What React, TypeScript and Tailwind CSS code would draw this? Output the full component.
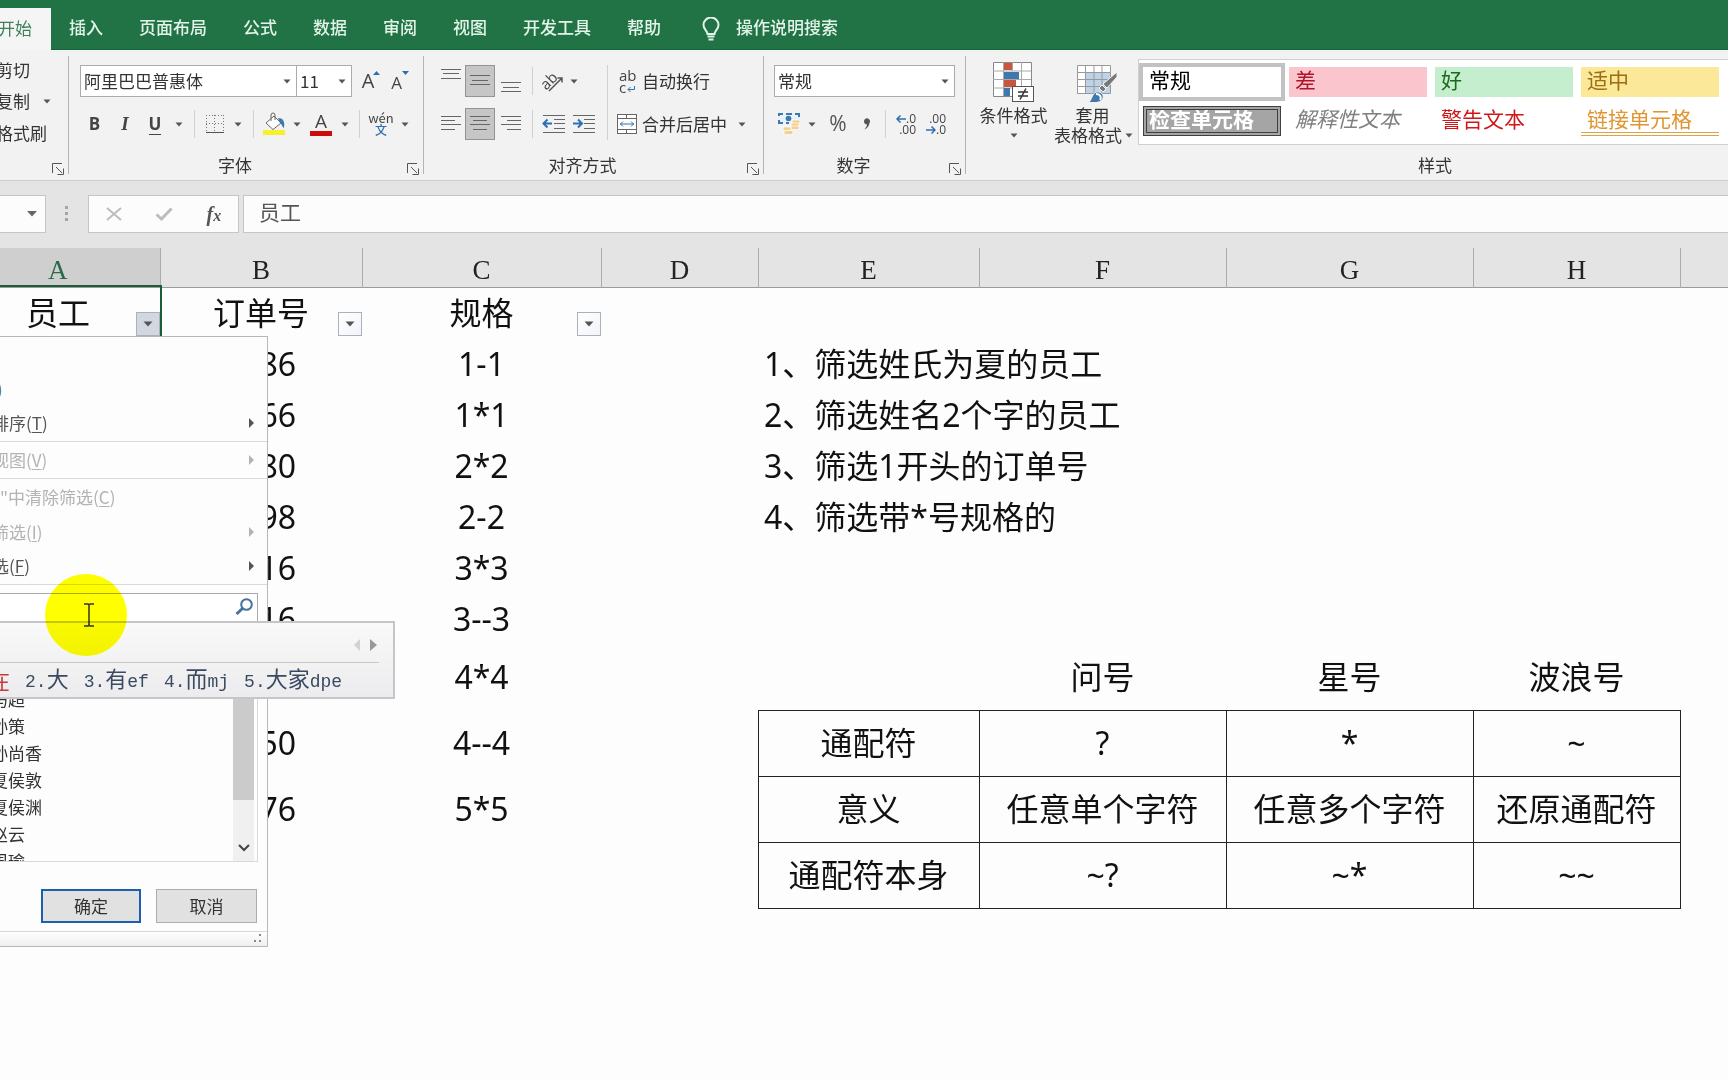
import React from "react";

const ui = "font-['Noto_Sans_CJK_SC','Noto_Sans',sans-serif]";
const cellFont = "font-['Noto_Sans','Noto_Sans_CJK_SC',sans-serif]";

function Caret({ className = "" }: { className?: string }) {
  return (
    <svg width="8" height="5" viewBox="0 0 8 5" className={`shrink-0 ${className}`} aria-hidden="true">
      <path d="M0.5 0.5h7L4 4.5z" fill="#555" />
    </svg>
  );
}

function CaretButton({ label, className = "w-[18px]" }: { label: string; className?: string }) {
  return (
    <button aria-label={label} className={`flex h-8 items-center justify-center ${className}`}>
      <Caret />
    </button>
  );
}

function Tool({ label, className = "", children }: { label: string; className?: string; children: React.ReactNode }) {
  return (
    <button aria-label={label} className={`flex h-8 shrink-0 items-center justify-center ${className}`}>
      {children}
    </button>
  );
}

function Rule({ className = "mx-1.5" }: { className?: string }) {
  return <span className={`h-7 w-px shrink-0 bg-[#d0d0d0] ${className}`} />;
}

function Launcher({ label }: { label: string }) {
  return (
    <button aria-label={label} className="absolute bottom-[5px] right-1">
      <svg width="12" height="12" viewBox="0 0 12 12" fill="none" stroke="#555" className="block" aria-hidden="true">
        <path d="M0.5 10V0.5H10M4 4l6 6M11.500 5.500V11.500H5.500" />
      </svg>
    </button>
  );
}

function Group({ title, className, children }: { title: string; className: string; children: React.ReactNode }) {
  return (
    <section aria-label={title} className={`relative flex shrink-0 flex-col justify-between pt-[15px] ${className}`}>
      {children}
      <div className="pb-[3px] pr-[22px] text-center leading-6">{title}</div>
    </section>
  );
}

function GroupRule() {
  return <span className="my-1.5 w-px shrink-0 bg-[#b4b4b4]" />;
}

function Combo({ label, value, className }: { label: string; value: string; className: string }) {
  return (
    <span className={`relative flex h-8 shrink-0 ${className}`}>
      <select aria-label={label} className="w-full appearance-none border border-[#ababab] bg-white pl-[3px] text-[#333] outline-none">
        <option>{value}</option>
      </select>
      <Caret className="pointer-events-none absolute right-1.5 top-3.5" />
    </span>
  );
}

function AlignIcon({ lines }: { lines: [number, number, number][] }) {
  return (
    <svg width="20" height="24" viewBox="0 0 20 24" stroke="#666" aria-hidden="true">
      {lines.map(([a, b, y]) => (
        <path key={y} d={`M${a} ${y}.5H${b}`} />
      ))}
    </svg>
  );
}

function IndentIcon({ inward }: { inward?: boolean }) {
  return (
    <svg width="24" height="20" viewBox="0 0 24 20" fill="none" stroke="#666" aria-hidden="true">
      <path d="M1 1.500H23M12 5.500H23M12 9.500H23M12 14.500H23M1 18.500H23" />
      {inward ? (
        <path d="M1 9.500H9M6 5.500l4 4-4 4" stroke="#2f6fb0" strokeWidth="2" />
      ) : (
        <path d="M10 9.500H2M5.500 5.500l-4 4 4 4" stroke="#2f6fb0" strokeWidth="2" />
      )}
    </svg>
  );
}

const tabs = ["插入", "页面布局", "公式", "数据", "审阅", "视图", "开发工具", "帮助"];

function TabBar() {
  return (
    <nav className="flex h-[50px] items-end border-b border-[#17633a] bg-[#217346] text-[17px] font-medium text-[#e2f3e8]">
      <button className="-mb-px flex h-[42px] w-[51px] shrink-0 items-center overflow-hidden whitespace-nowrap bg-[#f4f5f4] pb-0.5 font-normal text-[#3f7f5c]">
        <span className="-ml-[2px]">开始</span>
      </button>
      <div className="ml-[18px] flex h-[42px] items-center gap-9 pb-0.5">
        {tabs.map((t) => (
          <button key={t} className="whitespace-nowrap">{t}</button>
        ))}
      </div>
      <button className="ml-[41px] flex h-[42px] items-center gap-4 whitespace-nowrap pb-0.5">
        <svg width="18" height="24" viewBox="0 0 18 24" fill="none" stroke="#e2f3e8" strokeWidth="2" className="mt-1" aria-hidden="true">
          <path d="M5.500 17c0-3-4-4.500-4-9a7.500 7.500 0 0 1 15 0c0 4.500-4 6-4 9zM5.500 19.500h7M6.500 22.500h5" />
        </svg>
        操作说明搜索
      </button>
    </nav>
  );
}

function ClipboardGroup() {
  return (
    <section aria-label="剪贴板" className="relative w-[68px] shrink-0 overflow-hidden whitespace-nowrap pt-1">
      <button className="-ml-1 block h-8">剪切</button>
      <div className="-mt-px flex items-center">
        <button className="-ml-1 h-8">复制</button>
        <CaretButton label="复制选项" className="ml-2 w-[18px]" />
      </div>
      <button className="-ml-1 block h-8">格式刷</button>
      <Launcher label="剪贴板设置" />
    </section>
  );
}

function FontGroup() {
  return (
    <Group title="字体" className="w-[354px]">
      <div className="flex flex-col gap-[11px]">
        <div className="flex pl-[11px]">
          <Combo label="字体名称" value="阿里巴巴普惠体" className="w-[217px]" />
          <Combo label="字号" value="11" className="-ml-px w-[56px]" />
          <Tool label="增大字号" className="ml-1.5 w-[26px] gap-0">
            <span className="font-['Open_Sans',sans-serif] text-[20px] text-[#444]">A</span>
            <svg width="7" height="4" viewBox="0 0 7 4" className="-ml-px mb-4" aria-hidden="true"><path d="M0 4h7L3.500 0z" fill="#2f6fb0" /></svg>
          </Tool>
          <Tool label="减小字号" className="ml-1 w-[24px]">
            <span className="pt-1 font-['Open_Sans',sans-serif] text-[17px] text-[#444]">A</span>
            <svg width="7" height="4" viewBox="0 0 7 4" className="mb-4" aria-hidden="true"><path d="M0 0h7L3.500 4z" fill="#2f6fb0" /></svg>
          </Tool>
        </div>
        <div className="flex items-center pl-2.5 text-[#444]">
          <Tool label="加粗" className="w-[31px]"><b className="font-['Open_Sans',sans-serif] text-[17px]">B</b></Tool>
          <Tool label="倾斜" className="w-[30px]"><i className="font-['Liberation_Serif',serif] text-[19px] font-bold">I</i></Tool>
          <Tool label="下划线" className="w-[30px]"><span className="border-b border-[#444] font-['Open_Sans',sans-serif] text-[17px] font-bold leading-5">U</span></Tool>
          <CaretButton label="下划线选项" />
          <Rule />
          <Tool label="边框" className="w-[28px]">
            <svg width="20" height="20" viewBox="0 0 20 20" fill="none" stroke="#777" aria-hidden="true">
              <path d="M1 1.500H19M1 9.500H19M1.500 1V17M9.500 1V17M18.500 1V17" strokeDasharray="1 2" />
              <path d="M1 18.500H19" stroke="#555" />
            </svg>
          </Tool>
          <CaretButton label="边框选项" />
          <Rule />
          <Tool label="填充颜色" className="w-[28px]">
            <svg width="24" height="24" viewBox="0 0 24 24" fill="none" aria-hidden="true">
              <rect x="1" y="18" width="22" height="5" fill="#f7f12c" />
              <path d="M4 11l8-7 7 7-8 6.500z" fill="#fff" stroke="#666" />
              <path d="M9 9V3a2 2 0 0 1 4 0v5" stroke="#666" />
              <path d="M16 6c5 0 7 3 6 10-2-1-2-4-4-5z" fill="#3f78ad" />
            </svg>
          </Tool>
          <CaretButton label="填充颜色选项" />
          <Tool label="字体颜色" className="w-[30px]">
            <span className="flex h-6 w-[22px] flex-col items-center justify-between">
              <span className="font-['Open_Sans',sans-serif] text-[19px] leading-[19px]">A</span>
              <span className="h-[5px] w-full shrink-0 bg-[#cf0a0a]" />
            </span>
          </Tool>
          <CaretButton label="字体颜色选项" className="w-[17px]" />
          <Rule />
          <Tool label="拼音指南" className="w-[30px] flex-col">
            <span className="text-[13px] leading-3">wén</span>
            <span className="text-[12px] font-medium leading-3 text-[#2f6fb0]">文</span>
          </Tool>
          <CaretButton label="拼音选项" className="w-[17px]" />
        </div>
      </div>
      <Launcher label="字体设置" />
    </Group>
  );
}

function AlignmentGroup() {
  return (
    <Group title="对齐方式" className="w-[339px]">
      <div className="flex">
        <div className="flex flex-col gap-[11px] pl-[13px]">
          <div className="flex items-center">
            <Tool label="顶端对齐" className="w-[28px]"><AlignIcon lines={[[0, 20, 0], [2, 18, 4], [0, 20, 9]]} /></Tool>
            <Tool label="垂直居中" className="w-[30px] border border-[#949494] bg-[#c6c6c6]"><AlignIcon lines={[[0, 20, 6], [2, 18, 11], [0, 20, 15]]} /></Tool>
            <Tool label="底端对齐" className="w-[31px]"><AlignIcon lines={[[0, 20, 13], [2, 18, 18], [0, 20, 22]]} /></Tool>
            <Rule />
            <Tool label="方向" className="w-[26px]">
              <span className="relative flex size-6 items-center justify-center">
                <span className="-rotate-45 pb-1.5 pr-1 font-['Open_Sans',sans-serif] text-[15px] leading-4 text-[#444]">ab</span>
                <svg width="24" height="24" viewBox="0 0 24 24" className="absolute inset-0" fill="none" stroke="#555" aria-hidden="true">
                  <path d="M9 22L22 9M17.500 9H22v4.500" strokeWidth="1.500" />
                </svg>
              </span>
            </Tool>
            <CaretButton label="方向选项" />
          </div>
          <div className="flex items-center">
            <Tool label="左对齐" className="w-[28px]"><AlignIcon lines={[[0, 20, 4], [0, 14, 8], [0, 20, 12], [0, 14, 17]]} /></Tool>
            <Tool label="居中" className="w-[30px] border border-[#949494] bg-[#c6c6c6]"><AlignIcon lines={[[0, 20, 4], [3, 17, 8], [0, 20, 12], [3, 17, 17]]} /></Tool>
            <Tool label="右对齐" className="w-[31px]"><AlignIcon lines={[[0, 20, 4], [6, 20, 8], [0, 20, 12], [6, 20, 17]]} /></Tool>
            <Rule />
            <Tool label="减少缩进量" className="w-[30px]"><IndentIcon /></Tool>
            <Tool label="增加缩进量" className="w-[30px]"><IndentIcon inward /></Tool>
          </div>
        </div>
        <span className="ml-2 w-px bg-[#d0d0d0]" />
        <div className="flex flex-col gap-[11px] pl-[9px]">
          <button className="flex h-8 items-center gap-[5px] whitespace-nowrap">
            <span className="relative flex w-5 flex-col pl-0.5 text-left font-['Open_Sans',sans-serif] text-[15px] leading-[12px] text-[#444]">
              <span>ab</span>
              <span>c</span>
              <svg width="8" height="7" viewBox="0 0 8 7" className="absolute bottom-0 right-0.5" fill="none" stroke="#2f6fb0" aria-hidden="true">
                <path d="M7.500 0v3.500H1M3.500 1L1 3.500 3.500 6" />
              </svg>
            </span>
            自动换行
          </button>
          <div className="flex">
            <button className="flex h-8 items-center gap-[5px] whitespace-nowrap">
              <svg width="20" height="20" viewBox="0 0 20 20" fill="none" stroke="#666" aria-hidden="true">
                <rect x="0.5" y="0.5" width="19" height="19" fill="#fff" />
                <path d="M0 4.500H20M0 15.500H20M9.500 0V4M9.500 16V20" />
                <path d="M3 10H17M6 7.500L3.500 10 6 12.500M14 7.500l2.500 2.500L14 12.500" stroke="#2f6fb0" />
              </svg>
              合并后居中
            </button>
            <CaretButton label="合并选项" className="ml-1.5 w-[18px]" />
          </div>
        </div>
      </div>
      <Launcher label="对齐设置" />
    </Group>
  );
}

function DecimalIcon({ top, bottom, left }: { top: string; bottom: string; left?: boolean }) {
  return (
    <span className="flex w-5 flex-col font-['Open_Sans',sans-serif] text-[12px] leading-[11px] text-[#444]">
      <span className="flex items-center justify-end">
        {left && <SmallArrow left />}
        {top}
      </span>
      <span className="flex items-center justify-end">
        {!left && <SmallArrow />}
        {bottom}
      </span>
    </span>
  );
}

function SmallArrow({ left }: { left?: boolean }) {
  return (
    <svg width="10" height="8" viewBox="0 0 10 8" fill="none" stroke="#2f6fb0" strokeWidth="1.500" className="shrink-0" aria-hidden="true">
      <path d={left ? "M10 4H1M4.500 0.500L1 4l3.500 3.500" : "M0 4H9M5.500 0.500L9 4 5.500 7.500"} />
    </svg>
  );
}

function NumberGroup() {
  return (
    <Group title="数字" className="w-[201px]">
      <div className="flex flex-col gap-[11px] pl-2.5">
        <Combo label="数字格式" value="常规" className="w-[181px]" />
        <div className="flex items-center pl-px">
          <Tool label="会计数字格式" className="w-[28px]">
            <svg width="24" height="24" viewBox="0 0 24 24" fill="none" aria-hidden="true">
              <rect x="1" y="1" width="22" height="11" fill="#e9f2fa" />
              <path d="M2 4V2h4M18 2h4v3M2 8v3h4M9 2h6M9 11h3" stroke="#3f78ad" strokeWidth="2" />
              <circle cx="11.500" cy="6.500" r="2.800" fill="#3f78ad" />
              <g fill="#f3cf92" stroke="#fff" strokeWidth="0.700">
                <rect x="15" y="8" width="8" height="3.500" rx="1.500" />
                <rect x="14" y="11" width="8" height="3.500" rx="1.500" />
                <rect x="14" y="14" width="8" height="3.500" rx="1.500" />
                <rect x="6" y="15" width="8" height="3.500" rx="1.500" />
                <rect x="7" y="18.500" width="9" height="4" rx="1.500" />
              </g>
            </svg>
          </Tool>
          <CaretButton label="会计格式选项" />
          <Tool label="百分比样式" className="w-[34px]"><span className="font-['Open_Sans',sans-serif] text-[21px] text-[#555]">%</span></Tool>
          <Tool label="千位分隔样式" className="w-[24px]">
            <svg width="8" height="12" viewBox="0 0 8 12" aria-hidden="true"><path d="M1 3.500a3 3 0 1 1 5.500 1.500C6 8 4 10.500 1.500 11.500 3 9.500 4 8 4 6.500 2 6.500 1 5 1 3.500z" fill="#555" /></svg>
          </Tool>
          <Rule className="ml-1.5 mr-2" />
          <Tool label="增加小数位数" className="w-[24px]"><DecimalIcon left top=".0" bottom=".00" /></Tool>
          <Tool label="减少小数位数" className="ml-1.5 w-[24px]"><DecimalIcon top=".00" bottom=".0" /></Tool>
        </div>
      </div>
      <Launcher label="数字设置" />
    </Group>
  );
}

const gallery = [
  { name: "常规", cls: "leading-6 outline-4 outline-[#c2c2c2] bg-white text-black" },
  { name: "差", cls: "leading-6 bg-[#fbc5ce] text-[#b0122a]" },
  { name: "好", cls: "leading-6 bg-[#c4eecd] text-[#1c6b1c]" },
  { name: "适中", cls: "leading-6 bg-[#fbe898] text-[#9c6f14]" },
  { name: "检查单元格", cls: "leading-4 border-4 border-double border-[#3f3f3f] bg-[#a5a5a5] font-bold text-white -indent-1" },
  { name: "解释性文本", cls: "leading-6 italic text-[#7f7f7f]" },
  { name: "警告文本", cls: "leading-6 text-[#d01818]" },
  { name: "链接单元格", cls: "leading-6 border-b-4 border-double border-[#dca348] text-[#e09530]" },
];

function StylesGroup() {
  return (
    <section aria-label="样式" className="flex w-[960px] shrink-0 flex-col justify-between pt-[9px]">
      <div className="flex">
        <button className="flex w-[87px] shrink-0 flex-col items-center pl-2 pt-px">
          <svg width="42" height="42" viewBox="0 0 42 42" fill="none" aria-hidden="true">
            <path d="M0.500 2.500h38v34h-38z" fill="#fff" stroke="#888" />
            <path d="M0 11h38M0 19.500h38M0 28h38M10.500 2v34M28.500 2v34M19.500 2v9" stroke="#a8a8a8" />
            <path d="M11 3h8v7h-8zM11 20h12v7H11z" fill="#c8553d" />
            <path d="M11 12h15v7H11zM11 28h6v8h-6z" fill="#3f78ad" />
            <rect x="19.500" y="26.500" width="21" height="15" fill="#fff" stroke="#555" />
            <path d="M25 32h10M25 36h10M33 28.500l-6 11" stroke="#333" strokeWidth="1.500" />
          </svg>
          <span className="pt-[3px] leading-5">条件格式</span>
          <Caret className="mt-2" />
        </button>
        <button className="flex w-[83px] shrink-0 flex-col items-center pt-px">
          <svg width="42" height="42" viewBox="0 0 42 42" fill="none" className="ml-1" aria-hidden="true">
            <path d="M1.500 5.500h33v28h-33z" fill="#fff" />
            <path d="M10 12h25v21H10z" fill="#bcd3e8" />
            <path d="M1.500 5.500h33v28h-33zM1 12.500h33M1 19.500h33M1 26.500h33M9.500 5v28M18 5v28M26 5v28" stroke="#999" />
            <path d="M41 12v5l-10 11-4-4zM26 25l4 4-3 3-4-4z" fill="#777" stroke="#f3f3f3" />
            <path d="M11 43c5-1 4-8 9-11 6-1 9 4 6 8-3 3-9 3-15 3z" fill="#3f78ad" stroke="#f3f3f3" />
            <path d="M20 34c4 0 6 3 4 6" stroke="#fff" strokeWidth="2" />
          </svg>
          <span className="pr-1 pt-[3px] leading-5">套用</span>
          <span className="flex items-center gap-[3px] whitespace-nowrap pr-0.5 leading-5">表格格式<Caret /></span>
        </button>
        <div className="ml-0.5 grid grow grid-cols-[repeat(4,138px)] content-start gap-x-2 gap-y-[9px] overflow-hidden border border-[#d0d0d0] bg-white p-1 pb-[7px] pt-[7px]">
          {gallery.map((g) => (
            <button key={g.name} className={`flex h-[30px] items-start overflow-hidden whitespace-nowrap pl-1.5 text-[21px] ${g.cls}`}>
              {g.name}
            </button>
          ))}
        </div>
      </div>
      <div className="pb-[3px] pr-[22px] text-center leading-6">样式</div>
    </section>
  );
}

function FormulaBar() {
  return (
    <div className="flex h-[67px] items-center bg-[#e4e4e4] pb-[1px]">
      <div className="relative flex h-[38px] w-[46px] shrink-0 border border-l-0 border-[#c6c6c6] bg-[#fcfcfc]">
        <input aria-label="名称框" className="w-6 bg-transparent outline-none" />
        <button aria-label="名称框选项" className="flex w-4 items-center justify-center">
          <svg width="10" height="6" viewBox="0 0 10 6" aria-hidden="true"><path d="M0 0h10L5 5.500z" fill="#666" /></svg>
        </button>
      </div>
      <svg width="4" height="16" viewBox="0 0 4 16" className="ml-[18px] shrink-0" fill="#a5a5a5" aria-hidden="true">
        <path d="M1 0h3v3H1zM1 6h3v3H1zM1 12h3v3H1z" />
      </svg>
      <div className="ml-5 flex h-[38px] w-[151px] shrink-0 items-center justify-around border border-[#c6c6c6] bg-[#fcfcfc]">
        <button aria-label="取消编辑">
          <svg width="16" height="14" viewBox="0 0 16 14" stroke="#bdbdbd" strokeWidth="2" aria-hidden="true"><path d="M1 1l14 12M15 1L1 13" /></svg>
        </button>
        <button aria-label="输入">
          <svg width="18" height="14" viewBox="0 0 18 14" fill="none" stroke="#bdbdbd" strokeWidth="3" aria-hidden="true"><path d="M1.500 7.500l5 4.500L16.500 1.500" /></svg>
        </button>
        <button aria-label="插入函数" className="font-['Liberation_Serif',serif] text-[20px] font-bold italic text-[#555]">
          f<span className="text-[16px]">x</span>
        </button>
      </div>
      <input aria-label="编辑栏" defaultValue="员工" className="ml-1 h-[38px] min-w-0 grow border border-r-0 border-[#c6c6c6] bg-[#fcfcfc] pb-1.5 pl-[15px] text-[21px] text-[#555] outline-none" />
    </div>
  );
}

function FilterButton({ label, pressed }: { label: string; pressed?: boolean }) {
  return (
    <button
      aria-label={label}
      className={`absolute bottom-0.5 right-0 flex size-6 items-center justify-center border border-[#a9b2bb] ${pressed ? "bg-[#d3d8e0]" : "bg-gradient-to-br from-white to-[#f1f4f8]"}`}
    >
      <svg width="10" height="6" viewBox="0 0 10 6" aria-hidden="true"><path d="M0.500 0.500h9L5 5.500z" fill="#555" /></svg>
    </button>
  );
}

type Row = { b: string; c: string; tall?: boolean; boxed?: boolean; note?: string; rest?: string[] };

const rows: Row[] = [
  { b: "86", c: "1-1", note: "1、筛选姓氏为夏的员工" },
  { b: "66", c: "1*1", note: "2、筛选姓名2个字的员工" },
  { b: "80", c: "2*2", note: "3、筛选1开头的订单号" },
  { b: "98", c: "2-2", note: "4、筛选带*号规格的" },
  { b: "16", c: "3*3" },
  { b: "16", c: "3--3" },
  { b: "", c: "4*4", tall: true, rest: ["", "问号", "星号", "波浪号"] },
  { b: "50", c: "4--4", tall: true, boxed: true, rest: ["通配符", "?", "*", "~"] },
  { b: "76", c: "5*5", tall: true, boxed: true, rest: ["意义", "任意单个字符", "任意多个字符", "还原通配符"] },
  { b: "", c: "", tall: true, boxed: true, rest: ["通配符本身", "~?", "~*", "~~"] },
];

function Sheet() {
  return (
    <div className="-ml-11">
      <table className="w-full table-fixed border-collapse text-center text-[32px] leading-none text-[#111]">
        <colgroup>
          <col className="w-[204px]" />
          <col className="w-[202px]" />
          <col className="w-[239px]" />
          <col className="w-[157px]" />
          <col className="w-[221px]" />
          <col className="w-[247px]" />
          <col className="w-[247px]" />
          <col className="w-[207px]" />
          <col />
        </colgroup>
        <thead className="border-b border-[#9b9b9b] bg-[#e4e4e4] font-['Liberation_Serif',serif] text-[27px]">
          <tr className="h-[39px]">
            {["A", "B", "C", "D", "E", "F", "G", "H", ""].map((h) => (
              <th
                key={h}
                scope="col"
                className={`p-0 pt-1.5 font-normal ${h === "A" ? "bg-[#cfcfcf] text-[#2b6a4b]" : "text-[#222]"} ${h ? "border-r border-[#ababab]" : ""}`}
              >
                {h}
              </th>
            ))}
          </tr>
        </thead>
        <tbody className={cellFont}>
          <tr className="h-[51px]">
            <td className="relative p-0 outline-2 outline-[#1b5e3a]">
              员工
              <FilterButton label="筛选员工" pressed />
            </td>
            <td className="relative p-0">
              订单号
              <FilterButton label="筛选订单号" />
            </td>
            <td className="relative p-0">
              规格
              <FilterButton label="筛选规格" />
            </td>
            <td colSpan={6} />
          </tr>
          {rows.map((r, i) => (
            <tr key={i} className={r.tall ? "h-[66px]" : "h-[51px]"}>
              <td className="p-0" />
              <td className="p-0 pr-[66px] text-right">{r.b}</td>
              <td className="p-0">{r.c}</td>
              <td className="p-0" />
              {r.rest ? (
                r.rest.map((t, j) => (
                  <td key={j} className={`whitespace-nowrap p-0 ${r.boxed ? "border border-[#222]" : ""}`}>{t}</td>
                ))
              ) : (
                <td colSpan={4} className="whitespace-nowrap p-0 pl-1.5 text-left">{r.note}</td>
              )}
              <td className="p-0" />
            </tr>
          ))}
        </tbody>
      </table>
    </div>
  );
}

function MenuItem({ text, hotkey, disabled, arrow, className }: { text: string; hotkey: string; disabled?: boolean; arrow?: boolean; className: string }) {
  return (
    <button
      role="menuitem"
      aria-disabled={disabled}
      className={`flex w-full items-center justify-between whitespace-nowrap pr-[13px] ${disabled ? "text-[#b3b3b3]" : "text-[#555]"} ${className}`}
    >
      <span>
        {text}(<u className="underline-offset-2">{hotkey}</u>)
      </span>
      {arrow && (
        <svg width="5" height="10" viewBox="0 0 5 10" fill="currentColor" aria-hidden="true"><path d="M0 0l5 5-5 5z" /></svg>
      )}
    </button>
  );
}

const names = ["马超", "孙策", "孙尚香", "夏侯敦", "夏侯渊", "赵云", "周瑜"];

const candidates: { n: string; word: string; code: string }[] = [
  { n: "2.", word: "大", code: "" },
  { n: "3.", word: "有", code: "ef" },
  { n: "4.", word: "而", code: "mj" },
  { n: "5.", word: "大家", code: "dpe" },
];

function InputPopup() {
  return (
    <div className="absolute left-0 top-[285px] h-[78px] w-[395px] border-2 border-l-0 border-[#c6c6ca] bg-gradient-to-b from-[#f9f9f9] to-[#ececee]">
      <div className="mr-3.5 flex h-10 items-center justify-end gap-2.5 border-b border-[#c9c9c9] pt-1 pr-0.5">
        <button aria-label="上一页"><svg width="6" height="12" viewBox="0 0 6 12" className="block" aria-hidden="true"><path d="M6 0v12L0 6z" fill="#d2d2d2" /></svg></button>
        <button aria-label="下一页"><svg width="7" height="12" viewBox="0 0 7 12" className="block" aria-hidden="true"><path d="M0 0l7 6-7 6z" fill="#999" /></svg></button>
      </div>
      <div className="-ml-3 flex h-[33px] items-center gap-[15px] whitespace-nowrap pb-px text-[22px] leading-6 text-[#3a4a60]">
        <span className="text-[#c63a3a]">在</span>
        {candidates.map((c) => (
          <span key={c.n} className="flex items-baseline">
            <span className="font-['Liberation_Mono',monospace] text-[18px]">{c.n}</span>
            <span>{c.word}</span>
            <span className="font-['Liberation_Mono',monospace] text-[18px]">{c.code}</span>
          </span>
        ))}
      </div>
    </div>
  );
}

function FilterMenu() {
  return (
    <div className="absolute left-0 top-[88px] w-[268px] border border-l-0 border-[#b8b8b8] bg-[#fdfdfd]">
      <div role="menu" className="pt-[35px]">
        <button role="menuitem" className="-ml-[3px] block h-[34px] text-[#4c88a8]">)</button>
        <div className="border-b border-[#d9d9d9] pb-px"><MenuItem text="排序" hotkey="T" arrow className="-indent-2 h-[34px]" /></div>
        <div className="border-b border-[#d9d9d9]"><MenuItem text="视图" hotkey="V" arrow disabled className="-indent-2 h-9" /></div>
        <div className="border-b border-[#d9d9d9] pb-px">
          <MenuItem text={'"中清除筛选'} hotkey="C" disabled className="h-9" />
          <MenuItem text="筛选" hotkey="I" arrow disabled className="-indent-2 h-[34px]" />
          <MenuItem text="选" hotkey="F" arrow className="-indent-2 h-[34px]" />
        </div>
      </div>
      <div className="mr-[9px] mt-2 flex h-[34px] border border-l-0 border-[#a9a9a9] bg-white pr-1">
        <input aria-label="搜索" className="min-w-0 grow bg-transparent outline-none" />
        <svg width="18" height="18" viewBox="0 0 18 18" fill="none" stroke="#46709e" className="mt-1" aria-hidden="true">
          <circle cx="11.500" cy="6.500" r="5.300" strokeWidth="2" />
          <path d="M7.500 10.500L1.500 16" strokeWidth="3" />
        </svg>
      </div>
      <div className="mr-[9px] mt-2 flex h-[227px] overflow-hidden border border-l-0 border-[#d9d9d9] bg-[#fdfdfd] pr-[3px]">
        <ul className="-ml-[9px] grow whitespace-nowrap pt-[49px] text-[#333]">
          {names.map((n) => (
            <li key={n} className="h-[27px] leading-[27px]">{n}</li>
          ))}
        </ul>
        <div className="flex w-[21px] flex-col items-center bg-[#f0f0f0]">
          <span className="h-[164px] w-full shrink-0 bg-[#cbcbcb]" />
          <button aria-label="向下滚动" className="mb-2 mt-auto">
            <svg width="12" height="9" viewBox="0 0 12 9" fill="none" stroke="#444" strokeWidth="2" aria-hidden="true"><path d="M1 1l5 5 5-5" /></svg>
          </button>
        </div>
      </div>
      <div className="flex justify-end gap-[15px] pb-2 pr-2.5 pt-[27px] text-[#333]">
        <button className="h-[34px] w-[100px] border-2 border-[#1c5fae] bg-[#e1e1e1]">确定</button>
        <button className="h-[34px] w-[101px] border border-[#adadad] bg-[#e1e1e1]">取消</button>
      </div>
      <div className="flex h-[15px] items-center justify-end border-t border-[#d9d9d9] bg-gradient-to-b from-white to-[#eeeff1] pr-1">
        <svg width="10" height="10" viewBox="0 0 10 10" fill="#8a8a8a" aria-hidden="true"><path d="M6 0h2v2H6zM6 6h2v2H6zM1 6h2v2H1z" /></svg>
      </div>
    </div>
  );
}

export default function App() {
  return (
    <div className={`min-h-screen overflow-hidden bg-[#fdfdfd] text-[17px] text-[#333] ${ui}`}>
      <TabBar />
      <header className="flex h-[131px] overflow-hidden border-b border-[#cdcdcd] bg-[#f2f2f2]">
        <ClipboardGroup />
        <GroupRule />
        <FontGroup />
        <GroupRule />
        <AlignmentGroup />
        <GroupRule />
        <NumberGroup />
        <GroupRule />
        <StylesGroup />
      </header>
      <FormulaBar />
      <main className="relative">
        <Sheet />
        <FilterMenu />
        <div className="absolute left-0 top-[88px]">
          <InputPopup />
        </div>
        <div className="pointer-events-none absolute left-[45px] top-[326px] flex size-[82px] items-center justify-center rounded-full bg-[#ffff00] mix-blend-multiply">
          <svg width="10" height="24" viewBox="0 0 10 24" fill="none" stroke="#333" className="ml-1.5" aria-hidden="true">
            <path d="M0 1h4l1 1 1-1h4M5 2v20M0 23h4l1-1 1 1h4" strokeWidth="1.500" />
          </svg>
        </div>
      </main>
    </div>
  );
}
